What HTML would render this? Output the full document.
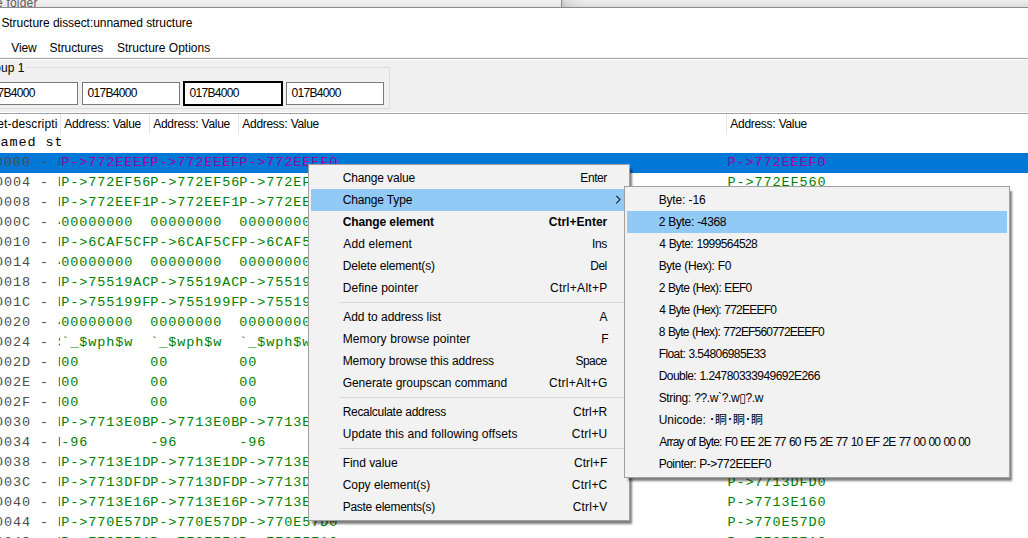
<!DOCTYPE html>
<html lang="en"><head><meta charset="utf-8"><title>Structure dissect:unnamed structure</title>
<style>

html,body{margin:0;padding:0;}
body{width:1028px;height:538px;position:relative;overflow:hidden;background:#fff;font-family:"Liberation Sans", "Noto Sans CJK JP", "DejaVu Sans", sans-serif;font-size:12px;color:#000;}
div,span{position:absolute;box-sizing:border-box;}
.t{white-space:pre;line-height:16px;height:16px;font-size:12px;color:#000;}
.b{font-weight:bold;}
.z1{z-index:1;}
.z3{z-index:3;}
.z5{z-index:5;}
.m{font-family:"Liberation Mono", monospace;font-size:13.5px;letter-spacing:0.9px;line-height:20px;height:20px;white-space:pre;overflow:hidden;}
.g{color:#008000;}
.k{color:#4d4d4d;}
.p{color:#a000a0;}
#strip{left:0;top:0;width:1028px;height:7px;background:linear-gradient(#f2f2f2,#e6e6e6);}
#strip2{left:562px;top:0;width:466px;height:7px;background:linear-gradient(90deg,rgba(0,0,0,.12) 0,rgba(0,0,0,.05) 6px,rgba(0,0,0,0) 20px),linear-gradient(#edeeef,#dcdcdc);}
#stripline{left:0;top:7px;width:1028px;height:1px;background:#8b8b8b;}
#stripv{left:561px;top:0;width:1px;height:7px;background:#8b8b8b;}
#panel{left:0;top:57px;width:1028px;height:55px;background:#f0f0f0;}
#pl1{left:0;top:58px;width:1028px;height:1px;background:#a6a6ab;}
#pl2{left:0;top:59px;width:1028px;height:1px;background:#fff;}
#gb{left:-20px;top:67px;width:410px;height:42px;border:1px solid #dcdcdc;}
#gbl{left:0;top:60px;width:27px;height:14px;background:#f0f0f0;}
.in{top:82px;width:98px;height:23px;background:#fff;border:1px solid #7a7a7a;}
.inf{border:2px solid #000;top:81px;height:25px;width:100px;}
#hline{left:0;top:113px;width:1028px;height:1px;background:#a0a0a0;}
.hs{top:114px;width:1px;height:20px;background:#e5e5e5;}
#sel{left:0;top:153px;width:1028px;height:20px;background:#0078d7;}
.menu{background:#f2f2f2;border:1px solid #a0a0a0;box-shadow:3px 4px 2px -1px rgba(0,0,0,.5);}
.hl{background:#91c9f7;height:22px;}
.sep{height:1px;background:#d7d7d7;}

</style></head><body>
<div id="strip"></div><div id="strip2"></div><div id="stripv"></div><div id="stripline"></div>
<div id="panel"></div><div id="pl1"></div><div id="pl2"></div><div id="gb"></div><div id="gbl"></div>
<span class="t" id="gl" style="left:-19px;top:60px;">Group 1</span>
<div class="in" style="left:-20px"></div>
<div class="in" style="left:82px"></div>
<div class="in inf" style="left:183px"></div>
<div class="in" style="left:286px"></div>
<div id="hline"></div>
<div class="hs" style="left:60px"></div>
<div class="hs" style="left:149px"></div>
<div class="hs" style="left:238px"></div>
<div class="hs" style="left:726px"></div>
<div id="sel"></div>
<span class="m" style="left:-26.6px;top:133px;width:87.6px;color:#000;">unnamed structure</span>
<span class="m k" style="left:-5px;top:153px;width:65.2px;">0000 - Pointer</span>
<span class="m p" style="left:61px;top:153px;width:89px;padding-left:.3px;">P-&gt;772EEEF0</span>
<span class="m p" style="left:150px;top:153px;width:89px;padding-left:.3px;">P-&gt;772EEEF0</span>
<span class="m p" style="left:239px;top:153px;width:200px;padding-left:.3px;">P-&gt;772EEEF0</span>
<span class="m p" style="left:727.4px;top:153px;width:200px;">P-&gt;772EEEF0</span>
<span class="m k" style="left:-5px;top:173px;width:65.2px;">0004 - Pointer</span>
<span class="m g" style="left:61px;top:173px;width:89px;padding-left:.3px;">P-&gt;772EF560</span>
<span class="m g" style="left:150px;top:173px;width:89px;padding-left:.3px;">P-&gt;772EF560</span>
<span class="m g" style="left:239px;top:173px;width:200px;padding-left:.3px;">P-&gt;772EF560</span>
<span class="m g" style="left:727.4px;top:173px;width:200px;">P-&gt;772EF560</span>
<span class="m k" style="left:-5px;top:193px;width:65.2px;">0008 - Pointer</span>
<span class="m g" style="left:61px;top:193px;width:89px;padding-left:.3px;">P-&gt;772EEF10</span>
<span class="m g" style="left:150px;top:193px;width:89px;padding-left:.3px;">P-&gt;772EEF10</span>
<span class="m g" style="left:239px;top:193px;width:200px;padding-left:.3px;">P-&gt;772EEF10</span>
<span class="m g" style="left:727.4px;top:193px;width:200px;">P-&gt;772EEF10</span>
<span class="m k" style="left:-5px;top:213px;width:65.2px;">000C - 4 Bytes (Hex)</span>
<span class="m g" style="left:61px;top:213px;width:89px;padding-left:.3px;">00000000</span>
<span class="m g" style="left:150px;top:213px;width:89px;padding-left:.3px;">00000000</span>
<span class="m g" style="left:239px;top:213px;width:200px;padding-left:.3px;">00000000</span>
<span class="m g" style="left:727.4px;top:213px;width:200px;">00000000</span>
<span class="m k" style="left:-5px;top:233px;width:65.2px;">0010 - Pointer</span>
<span class="m g" style="left:61px;top:233px;width:89px;padding-left:.3px;">P-&gt;6CAF5CF0</span>
<span class="m g" style="left:150px;top:233px;width:89px;padding-left:.3px;">P-&gt;6CAF5CF0</span>
<span class="m g" style="left:239px;top:233px;width:200px;padding-left:.3px;">P-&gt;6CAF5CF0</span>
<span class="m g" style="left:727.4px;top:233px;width:200px;">P-&gt;6CAF5CF0</span>
<span class="m k" style="left:-5px;top:253px;width:65.2px;">0014 - 4 Bytes (Hex)</span>
<span class="m g" style="left:61px;top:253px;width:89px;padding-left:.3px;">00000000</span>
<span class="m g" style="left:150px;top:253px;width:89px;padding-left:.3px;">00000000</span>
<span class="m g" style="left:239px;top:253px;width:200px;padding-left:.3px;">00000000</span>
<span class="m g" style="left:727.4px;top:253px;width:200px;">00000000</span>
<span class="m k" style="left:-5px;top:273px;width:65.2px;">0018 - Pointer</span>
<span class="m g" style="left:61px;top:273px;width:89px;padding-left:.3px;">P-&gt;75519AC0</span>
<span class="m g" style="left:150px;top:273px;width:89px;padding-left:.3px;">P-&gt;75519AC0</span>
<span class="m g" style="left:239px;top:273px;width:200px;padding-left:.3px;">P-&gt;75519AC0</span>
<span class="m g" style="left:727.4px;top:273px;width:200px;">P-&gt;75519AC0</span>
<span class="m k" style="left:-5px;top:293px;width:65.2px;">001C - Pointer</span>
<span class="m g" style="left:61px;top:293px;width:89px;padding-left:.3px;">P-&gt;755199F0</span>
<span class="m g" style="left:150px;top:293px;width:89px;padding-left:.3px;">P-&gt;755199F0</span>
<span class="m g" style="left:239px;top:293px;width:200px;padding-left:.3px;">P-&gt;755199F0</span>
<span class="m g" style="left:727.4px;top:293px;width:200px;">P-&gt;755199F0</span>
<span class="m k" style="left:-5px;top:313px;width:65.2px;">0020 - 4 Bytes (Hex)</span>
<span class="m g" style="left:61px;top:313px;width:89px;padding-left:.3px;">00000000</span>
<span class="m g" style="left:150px;top:313px;width:89px;padding-left:.3px;">00000000</span>
<span class="m g" style="left:239px;top:313px;width:200px;padding-left:.3px;">00000000</span>
<span class="m g" style="left:727.4px;top:313px;width:200px;">00000000</span>
<span class="m k" style="left:-5px;top:333px;width:65.2px;">0024 - String[9]</span>
<span class="m g" style="left:61px;top:333px;width:89px;padding-left:.3px;">`_$wph$w</span>
<span class="m g" style="left:150px;top:333px;width:89px;padding-left:.3px;">`_$wph$w</span>
<span class="m g" style="left:239px;top:333px;width:200px;padding-left:.3px;">`_$wph$w</span>
<span class="m g" style="left:727.4px;top:333px;width:200px;">`_$wph$w</span>
<span class="m k" style="left:-5px;top:353px;width:65.2px;">002D - Byte (Hex)</span>
<span class="m g" style="left:61px;top:353px;width:89px;padding-left:.3px;">00</span>
<span class="m g" style="left:150px;top:353px;width:89px;padding-left:.3px;">00</span>
<span class="m g" style="left:239px;top:353px;width:200px;padding-left:.3px;">00</span>
<span class="m g" style="left:727.4px;top:353px;width:200px;">00</span>
<span class="m k" style="left:-5px;top:373px;width:65.2px;">002E - Byte (Hex)</span>
<span class="m g" style="left:61px;top:373px;width:89px;padding-left:.3px;">00</span>
<span class="m g" style="left:150px;top:373px;width:89px;padding-left:.3px;">00</span>
<span class="m g" style="left:239px;top:373px;width:200px;padding-left:.3px;">00</span>
<span class="m g" style="left:727.4px;top:373px;width:200px;">00</span>
<span class="m k" style="left:-5px;top:393px;width:65.2px;">002F - Byte (Hex)</span>
<span class="m g" style="left:61px;top:393px;width:89px;padding-left:.3px;">00</span>
<span class="m g" style="left:150px;top:393px;width:89px;padding-left:.3px;">00</span>
<span class="m g" style="left:239px;top:393px;width:200px;padding-left:.3px;">00</span>
<span class="m g" style="left:727.4px;top:393px;width:200px;">00</span>
<span class="m k" style="left:-5px;top:413px;width:65.2px;">0030 - Pointer</span>
<span class="m g" style="left:61px;top:413px;width:89px;padding-left:.3px;">P-&gt;7713E0B0</span>
<span class="m g" style="left:150px;top:413px;width:89px;padding-left:.3px;">P-&gt;7713E0B0</span>
<span class="m g" style="left:239px;top:413px;width:200px;padding-left:.3px;">P-&gt;7713E0B0</span>
<span class="m g" style="left:727.4px;top:413px;width:200px;">P-&gt;7713E0B0</span>
<span class="m k" style="left:-5px;top:433px;width:65.2px;">0034 - Byte</span>
<span class="m g" style="left:61px;top:433px;width:89px;padding-left:.3px;">-96</span>
<span class="m g" style="left:150px;top:433px;width:89px;padding-left:.3px;">-96</span>
<span class="m g" style="left:239px;top:433px;width:200px;padding-left:.3px;">-96</span>
<span class="m g" style="left:727.4px;top:433px;width:200px;">-96</span>
<span class="m k" style="left:-5px;top:453px;width:65.2px;">0038 - Pointer</span>
<span class="m g" style="left:61px;top:453px;width:89px;padding-left:.3px;">P-&gt;7713E1D0</span>
<span class="m g" style="left:150px;top:453px;width:89px;padding-left:.3px;">P-&gt;7713E1D0</span>
<span class="m g" style="left:239px;top:453px;width:200px;padding-left:.3px;">P-&gt;7713E1D0</span>
<span class="m g" style="left:727.4px;top:453px;width:200px;">P-&gt;7713E1D0</span>
<span class="m k" style="left:-5px;top:473px;width:65.2px;">003C - Pointer</span>
<span class="m g" style="left:61px;top:473px;width:89px;padding-left:.3px;">P-&gt;7713DFD0</span>
<span class="m g" style="left:150px;top:473px;width:89px;padding-left:.3px;">P-&gt;7713DFD0</span>
<span class="m g" style="left:239px;top:473px;width:200px;padding-left:.3px;">P-&gt;7713DFD0</span>
<span class="m g" style="left:727.4px;top:473px;width:200px;">P-&gt;7713DFD0</span>
<span class="m k" style="left:-5px;top:493px;width:65.2px;">0040 - Pointer</span>
<span class="m g" style="left:61px;top:493px;width:89px;padding-left:.3px;">P-&gt;7713E160</span>
<span class="m g" style="left:150px;top:493px;width:89px;padding-left:.3px;">P-&gt;7713E160</span>
<span class="m g" style="left:239px;top:493px;width:200px;padding-left:.3px;">P-&gt;7713E160</span>
<span class="m g" style="left:727.4px;top:493px;width:200px;">P-&gt;7713E160</span>
<span class="m k" style="left:-5px;top:513px;width:65.2px;">0044 - Pointer</span>
<span class="m g" style="left:61px;top:513px;width:89px;padding-left:.3px;">P-&gt;770E57D0</span>
<span class="m g" style="left:150px;top:513px;width:89px;padding-left:.3px;">P-&gt;770E57D0</span>
<span class="m g" style="left:239px;top:513px;width:200px;padding-left:.3px;">P-&gt;770E57D0</span>
<span class="m g" style="left:727.4px;top:513px;width:200px;">P-&gt;770E57D0</span>
<span class="m k" style="left:-5px;top:533px;width:65.2px;">0048 - Pointer</span>
<span class="m g" style="left:61px;top:533px;width:89px;padding-left:.3px;">P-&gt;770E57A0</span>
<span class="m g" style="left:150px;top:533px;width:89px;padding-left:.3px;">P-&gt;770E57A0</span>
<span class="m g" style="left:239px;top:533px;width:200px;padding-left:.3px;">P-&gt;770E57A0</span>
<span class="m g" style="left:727.4px;top:533px;width:200px;">P-&gt;770E57A0</span>
<div class="menu" style="left:308px;top:164px;width:322px;height:357px;z-index:2;"></div>
<div class="hl" style="left:311px;top:189px;width:316px;z-index:2;"></div>
<div class="sep" style="left:339px;top:302px;width:285px;z-index:2;"></div>
<div class="sep" style="left:339px;top:397px;width:285px;z-index:2;"></div>
<div class="sep" style="left:339px;top:448px;width:285px;z-index:2;"></div>
<svg style="position:absolute;left:614px;top:194px;z-index:3" width="8" height="12" viewBox="0 0 8 12"><path d="M2.3 1.8 L6 5.6 L2.3 9.4" fill="none" stroke="#1a1a1a" stroke-width="1.1"/></svg>
<div class="menu" style="left:624px;top:186px;width:386px;height:292px;z-index:4;"></div>
<div class="hl" style="left:627px;top:211px;width:380px;z-index:4;"></div>
<span class="t z1" style="left:-4px;top:-5px;letter-spacing:0.196px;color:#5a5a5a;">e folder</span>
<span class="t z1" style="left:1.4px;top:15px;letter-spacing:-0.055px;word-spacing:0.055px;">Structure dissect:unnamed structure</span>
<span class="t z1" style="left:11.3px;top:40px;letter-spacing:-0.166px;">View</span>
<span class="t z1" style="left:49.6px;top:40px;letter-spacing:-0.110px;">Structures</span>
<span class="t z1" style="left:116.9px;top:40px;letter-spacing:-0.005px;word-spacing:0.005px;">Structure Options</span>
<span class="t z1" style="left:-14.4px;top:85px;letter-spacing:-0.705px;">017B4000</span>
<span class="t z1" style="left:87.6px;top:85px;letter-spacing:-0.705px;">017B4000</span>
<span class="t z1" style="left:189.6px;top:85px;letter-spacing:-0.705px;">017B4000</span>
<span class="t z1" style="left:291.6px;top:85px;letter-spacing:-0.705px;">017B4000</span>
<div class="z1" style="left:0px;top:116px;width:58px;height:16px;overflow:hidden;">
<span class="t z1" style="left:-25px;top:0px;letter-spacing:0.122px;">Offset-description</span>
</div>
<span class="t z1" style="left:64.3px;top:116px;letter-spacing:-0.292px;word-spacing:0.292px;">Address: Value</span>
<span class="t z1" style="left:153.3px;top:116px;letter-spacing:-0.300px;word-spacing:0.300px;">Address: Value</span>
<span class="t z1" style="left:242.3px;top:116px;letter-spacing:-0.292px;word-spacing:0.292px;">Address: Value</span>
<span class="t z1" style="left:730.3px;top:116px;letter-spacing:-0.292px;word-spacing:0.292px;">Address: Value</span>
<span class="t z3 " style="left:342.7px;top:170px;letter-spacing:-0.156px;word-spacing:0.156px;">Change value</span>
<span class="t z3 " style="left:580.3px;top:170px;letter-spacing:-0.422px;">Enter</span>
<span class="t z3 " style="left:342.7px;top:192px;letter-spacing:-0.164px;word-spacing:0.164px;">Change Type</span>
<span class="t z3 b" style="left:342.7px;top:214px;letter-spacing:-0.117px;word-spacing:0.117px;">Change element</span>
<span class="t z3 b" style="left:548.7px;top:214px;letter-spacing:0.027px;">Ctrl+Enter</span>
<span class="t z3 " style="left:343.3px;top:236px;letter-spacing:0.111px;">Add element</span>
<span class="t z3 " style="left:592.1px;top:236px;letter-spacing:-0.408px;">Ins</span>
<span class="t z3 " style="left:342.7px;top:258px;letter-spacing:-0.161px;word-spacing:0.161px;">Delete element(s)</span>
<span class="t z3 " style="left:590.3px;top:258px;letter-spacing:-0.508px;">Del</span>
<span class="t z3 " style="left:342.7px;top:280px;letter-spacing:0.060px;">Define pointer</span>
<span class="t z3 " style="left:550px;top:280px;letter-spacing:0.290px;">Ctrl+Alt+P</span>
<span class="t z3 " style="left:343.3px;top:309px;letter-spacing:-0.061px;word-spacing:0.061px;">Add to address list</span>
<span class="t z3 " style="left:599.4px;top:309px;">A</span>
<span class="t z3 " style="left:342.7px;top:331px;letter-spacing:0.115px;">Memory browse pointer</span>
<span class="t z3 " style="left:601.2px;top:331px;">F</span>
<span class="t z3 " style="left:342.7px;top:353px;letter-spacing:-0.090px;word-spacing:0.090px;">Memory browse this address</span>
<span class="t z3 " style="left:575.5px;top:353px;letter-spacing:-0.558px;">Space</span>
<span class="t z3 " style="left:342.7px;top:375px;letter-spacing:-0.041px;word-spacing:0.041px;">Generate groupscan command</span>
<span class="t z3 " style="left:549px;top:375px;letter-spacing:0.254px;">Ctrl+Alt+G</span>
<span class="t z3 " style="left:342.7px;top:404px;letter-spacing:-0.308px;word-spacing:0.308px;">Recalculate address</span>
<span class="t z3 " style="left:573.1px;top:404px;letter-spacing:-0.029px;">Ctrl+R</span>
<span class="t z3 " style="left:342.7px;top:426px;letter-spacing:0.067px;">Update this and following offsets</span>
<span class="t z3 " style="left:571.8px;top:426px;letter-spacing:0.231px;">Ctrl+U</span>
<span class="t z3 " style="left:342.7px;top:455px;letter-spacing:-0.059px;word-spacing:0.059px;">Find value</span>
<span class="t z3 " style="left:573.9px;top:455px;letter-spacing:0.080px;">Ctrl+F</span>
<span class="t z3 " style="left:342.7px;top:477px;letter-spacing:-0.033px;word-spacing:0.033px;">Copy element(s)</span>
<span class="t z3 " style="left:571.8px;top:477px;letter-spacing:0.231px;">Ctrl+C</span>
<span class="t z3 " style="left:342.7px;top:499px;letter-spacing:-0.280px;word-spacing:0.280px;">Paste elements(s)</span>
<span class="t z3 " style="left:572.7px;top:499px;letter-spacing:0.183px;">Ctrl+V</span>
<span class="t z5" style="left:658.7px;top:192px;letter-spacing:-0.162px;word-spacing:0.162px;">Byte: -16</span>
<span class="t z5" style="left:658.7px;top:214px;letter-spacing:-0.359px;word-spacing:0.359px;">2 Byte: -4368</span>
<span class="t z5" style="left:659.3px;top:236px;letter-spacing:-0.596px;word-spacing:0.596px;">4 Byte: 1999564528</span>
<span class="t z5" style="left:658.7px;top:258px;letter-spacing:-0.424px;word-spacing:0.424px;">Byte (Hex): F0</span>
<span class="t z5" style="left:658.7px;top:280px;letter-spacing:-0.698px;word-spacing:0.698px;">2 Byte (Hex): EEF0</span>
<span class="t z5" style="left:659.3px;top:302px;letter-spacing:-0.761px;word-spacing:0.761px;">4 Byte (Hex): 772EEEF0</span>
<span class="t z5" style="left:658.7px;top:324px;letter-spacing:-0.799px;word-spacing:0.799px;">8 Byte (Hex): 772EF560772EEEF0</span>
<span class="t z5" style="left:658.7px;top:346px;letter-spacing:-0.589px;word-spacing:0.589px;">Float: 3.54806985E33</span>
<span class="t z5" style="left:658.7px;top:368px;letter-spacing:-0.557px;word-spacing:0.557px;">Double: 1.24780333949692E266</span>
<span class="t z5" style="left:658.7px;top:390px;letter-spacing:-0.362px;word-spacing:0.362px;">String: ??.w`?.w▯?.w</span>
<span class="t z5" style="left:658.7px;top:412px;letter-spacing:-0.039px;word-spacing:0.039px;">Unicode: ･眮･眮･眮</span>
<span class="t z5" style="left:659.3px;top:434px;letter-spacing:-0.885px;word-spacing:0.885px;">Array of Byte: F0 EE 2E 77 60 F5 2E 77 10 EF 2E 77 00 00 00 00</span>
<span class="t z5" style="left:658.7px;top:456px;letter-spacing:-0.502px;word-spacing:0.502px;">Pointer: P-&gt;772EEEF0</span>
</body></html>
